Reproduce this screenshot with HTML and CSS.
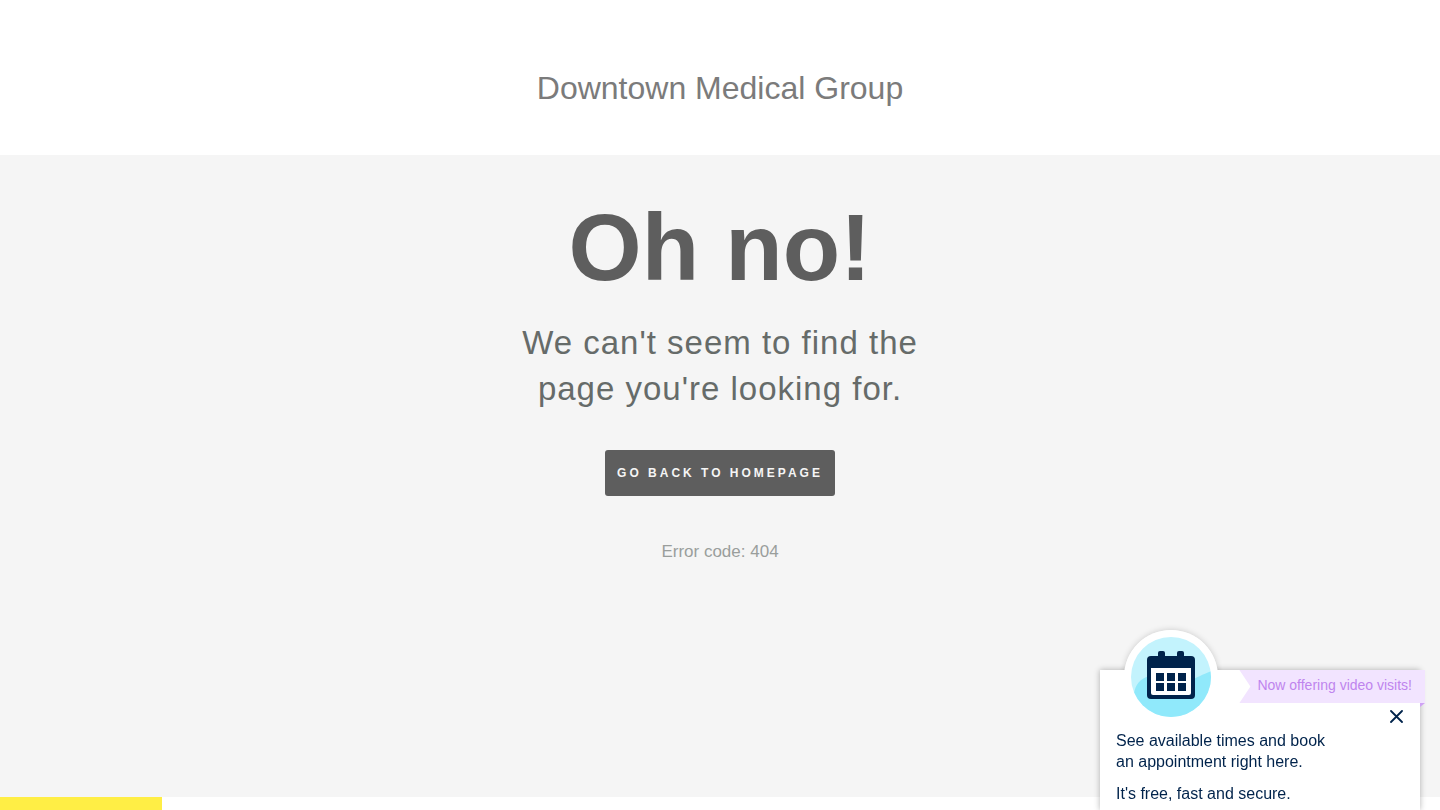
FILE: index.html
```html
<!DOCTYPE html>
<html lang="en">
<head>
<meta charset="utf-8">
<meta name="viewport" content="width=device-width, initial-scale=1">
<title>Downtown Medical Group</title>
<link rel="stylesheet" href="styles.css">
</head>
<body>
<header class="site-header">
  <p class="site-name">Downtown Medical Group</p>
</header>
<main class="error">
  <h1 class="error-title">Oh no!</h1>
  <p class="error-text">We can't seem to find the<br>page you're looking for.</p>
  <a class="home-link" href="#">Go back to homepage</a>
  <p class="error-code">Error code: 404</p>
</main>
<footer class="site-footer"><div class="footer-accent"></div></footer>

<aside class="booking" aria-label="Book an appointment">
  <div class="icon-shadow"></div>
  <div class="booking-card">
    <p class="booking-text">See available times and book<br>an appointment right here.</p>
    <p class="booking-text">It's free, fast and secure.</p>
  </div>
  <svg class="booking-icon" width="94" height="94" viewBox="0 0 94 94" aria-hidden="true">
    <defs><clipPath id="disc"><circle cx="47" cy="47" r="40"/></clipPath></defs>
    <circle cx="47" cy="47" r="47" fill="#fff"/>
    <g clip-path="url(#disc)">
      <rect width="94" height="94" fill="#c3f3fd"/>
      <path d="M5 94L10 64C11 55 16 48 26 46C42 44 56 54 67 50C75 47 80 43 94 39V94Z" fill="#90e9fb"/>
    </g>
    <g fill="#00234b">
      <rect x="34" y="21" width="7" height="12" rx="2"/>
      <rect x="53" y="21" width="7" height="12" rx="2"/>
      <rect x="23" y="26" width="48" height="43" rx="4"/>
    </g>
    <path d="M27 38H67V63Q67 65 65 65H29Q27 65 27 63Z" fill="#fff"/>
    <path d="M32 43h8v8h-8zM43 43h8v8h-8zM54 43h8v8h-8zM32 53h8v8h-8zM43 53h8v8h-8zM54 53h8v8h-8z" fill="#00234b"/>
  </svg>
  <div class="booking-ribbon"><span class="ribbon-label">Now offering video visits!</span></div>
  <button class="booking-close" type="button" aria-label="Close">
    <svg width="13" height="13" viewBox="0 0 13 13" aria-hidden="true"><path d="M1 1L12 12M12 1L1 12" stroke="#00234b" stroke-width="1.8" stroke-linecap="round"/></svg>
  </button>
</aside>
</body>
</html>
```

FILE: styles.css
```css
* { box-sizing: border-box; }

body {
  margin: 0;
  min-height: 100vh;
  display: flex;
  flex-direction: column;
  background: #fff;
  font-family: "Liberation Sans", Arial, Helvetica, sans-serif;
}

p, h1 { margin: 0; }

.site-header {
  padding: 68px 24px 47px;
  text-align: center;
}

.site-name {
  font-size: 32px;
  line-height: 40px;
  color: #7b7b7b;
}

.error {
  flex: 1;
  display: flex;
  flex-direction: column;
  align-items: center;
  padding: 38px 24px;
  background: #f5f5f5;
  text-align: center;
}

.error-title {
  font-size: 94px;
  line-height: 110px;
  color: #5e5e5e;
}

.error-text {
  margin-top: 17px;
  font-size: 33px;
  line-height: 46px;
  letter-spacing: 1px;
  color: #666b69;
}

.home-link {
  margin-top: 38px;
  padding: 0 12px;
  border-radius: 3px;
  background: #5e5e5e;
  color: #f5f5f5;
  font-size: 12px;
  font-weight: bold;
  line-height: 46px;
  letter-spacing: 3px;
  text-decoration: none;
  text-transform: uppercase;
}

.error-code {
  margin-top: 44px;
  font-size: 17px;
  line-height: 24px;
  color: #9a9e9c;
}

.site-footer { height: 13px; }

.footer-accent {
  width: 162px;
  height: 100%;
  background: #ffee45;
}

.booking {
  position: fixed;
  right: 20px;
  bottom: 0;
  width: 320px;
  color: #00234b;
}

.booking-card {
  position: relative;
  padding: 60px 16px 6px;
  background: #fff;
  box-shadow: 0 0 6px rgba(0, 0, 0, 0.3);
}

.booking-icon,
.icon-shadow {
  position: absolute;
  top: -40px;
  left: 24px;
}

.icon-shadow {
  width: 94px;
  height: 94px;
  border-radius: 50%;
  box-shadow: 0 0 6px rgba(0, 0, 0, 0.18);
}

.booking-ribbon {
  position: absolute;
  top: 0;
  right: -5px;
}

.ribbon-label {
  display: block;
  padding: 0 13px 2px 18px;
  background: #f2e4ff;
  clip-path: polygon(0 0, 100% 0, 100% 100%, 0 100%, 11px 50%);
  color: #bf84ee;
  font-size: 14px;
  line-height: 31px;
  white-space: nowrap;
}

.booking-ribbon::after {
  content: "";
  position: absolute;
  top: 100%;
  right: 0;
  border-top: 4px solid #cfa2f5;
  border-right: 5px solid transparent;
}

.booking-close {
  position: absolute;
  top: 40px;
  right: 17px;
  padding: 0;
  border: 0;
  background: none;
  line-height: 0;
  cursor: pointer;
}

.booking-text {
  font-size: 16px;
  line-height: 21px;
}

.booking-text + .booking-text { margin-top: 11px; }
```
